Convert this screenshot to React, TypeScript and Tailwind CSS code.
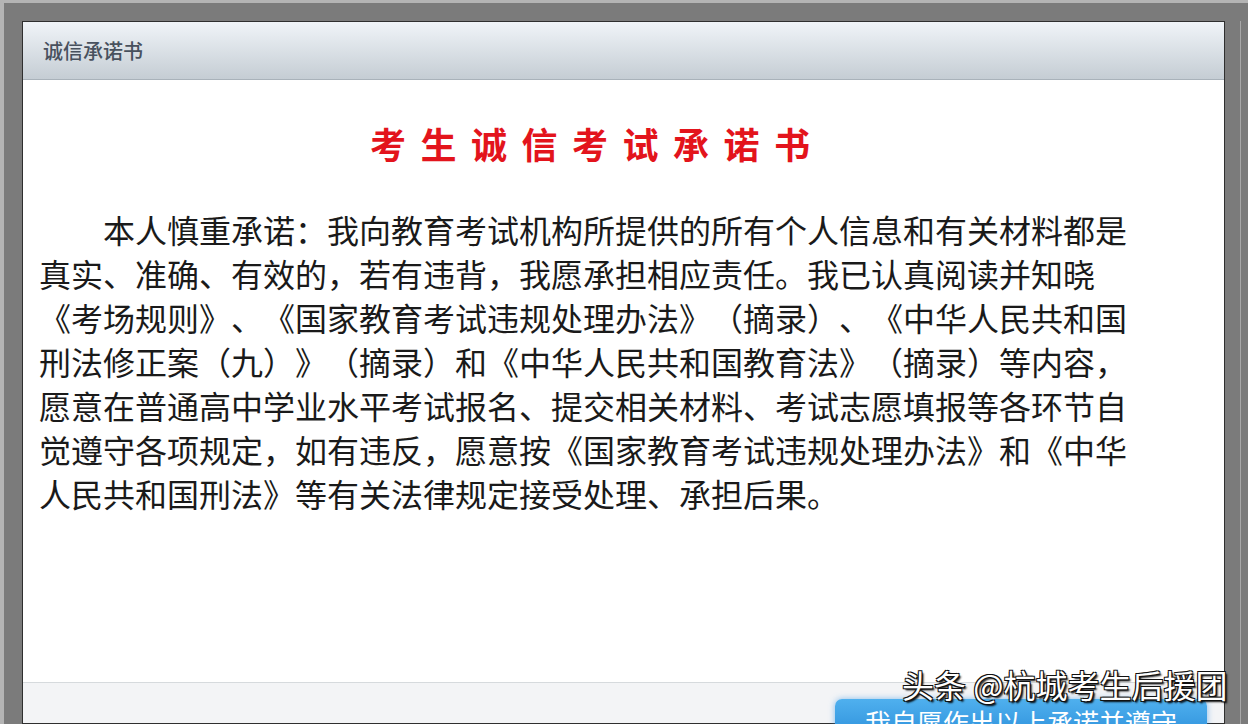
import React from 'react';

const lines: string[] = [
  '本人慎重承诺：我向教育考试机构所提供的所有个人信息和有关材料都是',
  '真实、准确、有效的，若有违背，我愿承担相应责任。我已认真阅读并知晓',
  '《考场规则》、《国家教育考试违规处理办法》（摘录）、《中华人民共和国',
  '刑法修正案（九）》（摘录）和《中华人民共和国教育法》（摘录）等内容，',
  '愿意在普通高中学业水平考试报名、提交相关材料、考试志愿填报等各环节自',
  '觉遵守各项规定，如有违反，愿意按《国家教育考试违规处理办法》和《中华',
  '人民共和国刑法》等有关法律规定接受处理、承担后果。',
];

const font = { fontFamily: '"Noto Sans CJK SC", "Noto Sans", sans-serif' };

const App: React.FC = () => {
  return (
    <div
      className="relative h-[724px] w-full overflow-hidden bg-[#7b7b7b] border-t-[3px] border-l-[4px] border-[#b4b4b4]"
      style={font}
    >
      <div className="flex h-full pl-[18px] pt-[18px]">
        <div className="flex w-[1203px] flex-col border border-[#2f2f2f] bg-white">
          {/* header */}
          <div className="flex h-[58px] items-center border-b border-[#a9b2ba] bg-gradient-to-b from-[#f0f4f8] to-[#c5cdd4] pl-[20px]">
            <span className="text-[20px] font-medium text-[#48515e]">诚信承诺书</span>
          </div>

          {/* body */}
          <div className="flex-1 bg-white">
            <h1 className="mt-[41px] whitespace-nowrap pl-[347px] text-[36px] font-bold leading-[44px] tracking-[14.5px] text-[#e3141c]">
              考生诚信考试承诺书
            </h1>
            <div className="mt-[42px] pl-[16px] text-[32px] leading-[44px] text-[#1a1a1a] [text-spacing-trim:space-all]">
              {lines.map((line, i) => (
                <div key={i} className={`whitespace-nowrap ${i === 0 ? 'pl-[64px]' : ''}`}>
                  {line}
                </div>
              ))}
            </div>
          </div>

          {/* footer */}
          <div className="h-[41px] shrink-0 border-t border-[#d6dadd] bg-[#f3f4f6] pt-[16px]">
            <div className="ml-[812px] w-[372px] rounded-[7px] bg-gradient-to-b from-[#4fb0ee] to-[#2b8fdb] pt-[6px] text-center text-[26px] leading-[34px] text-white shadow-[0_0_6px_rgba(60,150,230,0.6)]">
              我自愿作出以上承诺并遵守
            </div>
          </div>
        </div>
        <div className="ml-[15px] h-full w-px bg-[#a8a8a8]" />
      </div>

      {/* watermark */}
      <div
        className="absolute left-[898px] top-[663px] whitespace-nowrap text-[32px] leading-[36px] text-white"
        style={{ textShadow: '1px 1px 0 #111, -1px 1px 0 #111, 1px -1px 0 #111, -1px -1px 0 #111, 2px 2px 2px #000' }}
      >
        头条 @杭城考生后援团
      </div>
    </div>
  );
};

export default App;
